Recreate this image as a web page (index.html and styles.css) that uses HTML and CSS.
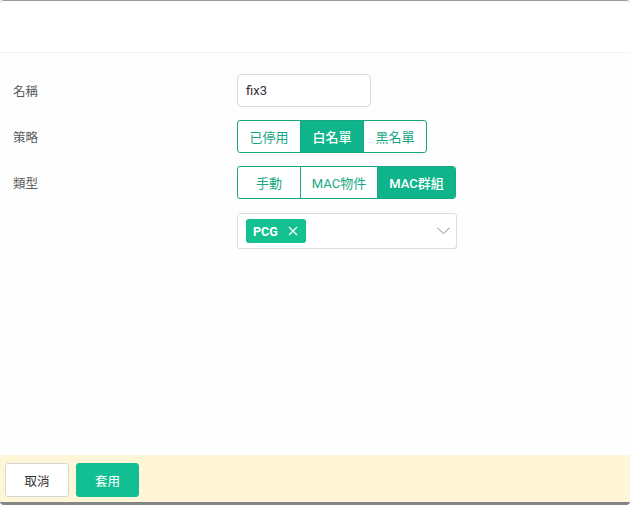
FILE: index.html
```html
<!DOCTYPE html>
<html lang="zh-Hant">
<head>
<meta charset="utf-8">
<title>Policy</title>
<link rel="stylesheet" href="styles.css">
</head>
<body>
<div class="panel">
  <div class="header"></div>
  <div class="body">
    <div class="row">
      <div class="label">名稱</div>
      <div class="field"><div class="input">fix3</div></div>
    </div>
    <div class="row">
      <div class="label">策略</div>
      <div class="field">
        <div class="seg">
          <div class="opt w63">已停用</div>
          <div class="opt w63 on">白名單</div>
          <div class="opt w63">黑名單</div>
        </div>
      </div>
    </div>
    <div class="row">
      <div class="label">類型</div>
      <div class="field">
        <div class="seg">
          <div class="opt w63">手動</div>
          <div class="opt w77">MAC物件</div>
          <div class="opt w79 on">MAC群組</div>
        </div>
      </div>
    </div>
    <div class="row sel-row">
      <div class="label"></div>
      <div class="field">
        <div class="select">
          <span class="tag">PCG
            <svg class="x" width="10" height="10" viewBox="0 0 10 10"><path d="M1 1L9 9M9 1L1 9" stroke="#fff" stroke-width="1.2" fill="none"/></svg>
          </span>
          <svg class="chev" width="13" height="8" viewBox="0 0 13 8"><path d="M0.5 0.8L6.5 6.8L12.5 0.8" stroke="#8a8a8a" stroke-width="1" fill="none"/></svg>
        </div>
      </div>
    </div>
  </div>
  <div class="footer">
    <button class="btn cancel">取消</button>
    <button class="btn apply">套用</button>
  </div>
</div>
</body>
</html>
```

FILE: styles.css
```css
* { box-sizing: border-box; }
html, body { margin: 0; padding: 0; background: #fff; }
body {
  font-family: "Roboto", "Noto Sans CJK TC", "Liberation Sans", sans-serif;
  font-size: 13px;
  color: #333;
}
.panel {
  width: 630px;
  height: 505px;
  border-top: 1px solid #9a9a9a;
  border-bottom: 3px solid #858585;
  border-radius: 4px;
  display: flex;
  flex-direction: column;
  overflow: hidden;
  background: #fefefe;
}
.header {
  height: 52px;
  flex: none;
  border-bottom: 1px solid #f4f4f4;
  background: #fff;
}
.body {
  flex: 1;
  padding-top: 21px;
  display: flex;
  flex-direction: column;
  gap: 13px;
}
.row {
  display: flex;
  align-items: center;
}
.sel-row { margin-top: 1px; }
.label {
  width: 237px;
  padding-left: 13px;
  font-size: 12.5px;
  color: #5a5a5a;
  flex: none;
}
.field { display: flex; }
.input {
  width: 134px;
  height: 33px;
  border: 1px solid #d9d9d9;
  border-radius: 4px;
  padding: 0 8px;
  display: flex;
  align-items: center;
  font-size: 13px;
  color: #333;
  background: #fff;
}
.seg {
  display: flex;
  height: 33px;
  border: 1px solid #17a883;
  border-radius: 3px;
  overflow: hidden;
  background: #fff;
}
.opt {
  display: flex;
  align-items: center;
  justify-content: center;
  color: #17a883;
  font-size: 13px;
  border-left: 1px solid #17a883;
}
.opt:first-child { border-left: none; }
.opt.on { background: #0fb48b; color: #fff; font-weight: 500; }
.w63 { width: 63px; }
.opt.w63:first-child { width: 62px; }
.w77 { width: 77px; }
.w79 { width: 78px; }
.select {
  width: 220px;
  height: 36px;
  border: 1px solid #dcdcdc;
  border-radius: 3px;
  background: #fff;
  display: flex;
  align-items: center;
  justify-content: space-between;
  padding: 0 6px 0 8px;
}
.tag {
  display: inline-flex;
  align-items: center;
  gap: 10px;
  height: 24px;
  padding: 0 8px 0 7px;
  border-radius: 3px;
  background: #13c090;
  color: #fff;
  font-weight: 700;
  font-size: 12.5px;
}
.x { display: block; }
.chev { display: block; }
.footer {
  height: 47px;
  flex: none;
  background: #fff6d8;
  display: flex;
  align-items: flex-start;
  padding: 8px 0 0 5px;
  gap: 7px;
}
.btn {
  height: 34px;
  width: 64px;
  border-radius: 3px;
  font-family: "Noto Sans CJK TC", "Roboto", sans-serif;
  font-size: 12.5px;
  cursor: pointer;
  padding: 0;
}
.cancel {
  background: #fff;
  border: 1px solid #d6d6d6;
  color: #333;
}
.apply {
  width: 63px;
  background: #12bf93;
  border: 1px solid #12bf93;
  color: #fff;
}
```
